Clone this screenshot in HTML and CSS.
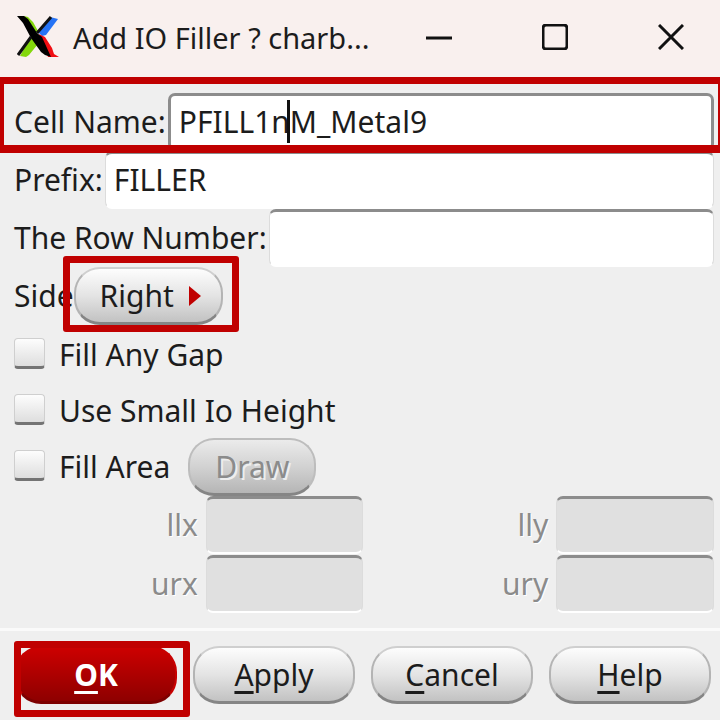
FILE: index.html
```
<!DOCTYPE html>
<html lang="en">
<head>
  <meta charset="utf-8">
  <title>Add IO Filler</title>
  <link rel="stylesheet" href="styles.css">
</head>
<body>

  <header class="titlebar">
    <svg class="logo" viewBox="0 0 42 42" aria-hidden="true">
      <path d="M7 0 L11 1 L16 6 L21 15 L17 18 Z M14 20 L21 28 L12 39 L9 41 L3 40 Z" fill="#84d80c"/>
      <path d="M33 1 L41 3 L29 19 L25 20 L21 16 Z" fill="#2673f5"/>
      <path d="M22 18 L28 21 L35 32 L37 38 L42 41 L31 41 Z" fill="#f00d12"/>
      <path d="M0 0 H7 L11 3 L20 17 L25 21 L34 41 L28 39 L24 36 L14 22 L6 7 Z" fill="#000"/>
      <path d="M34 1 L20 17 M14 21 L1 39" stroke="#111" stroke-width="3"/>
    </svg>
    <h1>Add IO Filler ? charb...</h1>
    <div class="window-buttons">
      <button type="button" aria-label="Minimize">
        <svg viewBox="0 0 26 26"><path d="M0 14 H26"/></svg>
      </button>
      <button type="button" aria-label="Maximize">
        <svg viewBox="0 0 26 26"><rect x="1" y="1" width="24" height="24" rx="3"/></svg>
      </button>
      <button type="button" aria-label="Close">
        <svg viewBox="0 0 26 26"><path d="M1 1 L25 25 M25 1 L1 25"/></svg>
      </button>
    </div>
  </header>

  <form class="form">
    <div class="row">
      <label for="cell">Cell Name:</label>
      <div class="field focused">
        <input id="cell" type="text" value="PFILL1nM_Metal9">
        <span class="caret"></span>
      </div>
      <span class="mark mark-cell"></span>
    </div>
    <div class="row">
      <label for="prefix">Prefix:</label>
      <div class="field"><input id="prefix" type="text" value="FILLER"></div>
    </div>
    <div class="row">
      <label for="rownum">The Row Number:</label>
      <div class="field"><input id="rownum" type="text"></div>
    </div>
    <div class="row">
      <span class="label">Side</span>
      <div class="marked">
        <button type="button" class="btn side">Right
          <svg class="arrow" viewBox="0 0 12 20" aria-hidden="true"><path d="M0 0 L12 10 L0 20 Z"/></svg>
        </button>
        <span class="mark mark-side"></span>
      </div>
    </div>

    <div class="checks">
      <div class="check"><input id="gap" type="checkbox"><label for="gap">Fill Any Gap</label></div>
      <div class="check"><input id="small" type="checkbox"><label for="small">Use Small Io Height</label></div>
      <div class="check">
        <input id="area" type="checkbox"><label for="area">Fill Area</label>
        <button type="button" class="btn draw" disabled>Draw</button>
      </div>
    </div>

    <div class="coords">
      <label for="llx">llx</label><input id="llx" type="text" disabled>
      <label for="lly">lly</label><input id="lly" type="text" disabled>
      <label for="urx">urx</label><input id="urx" type="text" disabled>
      <label for="ury">ury</label><input id="ury" type="text" disabled>
    </div>

    <div class="actions">
      <div class="marked">
        <button type="button" class="btn ok"><u>O</u>K</button>
        <span class="mark mark-ok"></span>
      </div>
      <button type="button" class="btn"><u>A</u>pply</button>
      <button type="button" class="btn"><u>C</u>ancel</button>
      <button type="button" class="btn"><u>H</u>elp</button>
    </div>
  </form>

</body>
</html>
```
FILE: styles.css
```
* {
  box-sizing: border-box;
}
body {
  margin: 0;
  background: #efefef;
  color: #1c1c1c;
  font-family: "Noto Sans", "Open Sans", sans-serif;
  font-size: 30px;
  line-height: 40px;
}
input, button {
  font: inherit;
  color: inherit;
}

/* title bar */
.titlebar {
  display: flex;
  align-items: center;
  height: 77px;
  padding: 0 36px 4px 17px;
  background: #f9f0ee;
}
.logo {
  width: 42px;
  height: 42px;
}
.titlebar h1 {
  flex: 1;
  margin: 2px 0 0 14px;
  font-size: 29px;
  font-weight: normal;
  white-space: nowrap;
}
.window-buttons {
  display: flex;
  gap: 90px;
}
.window-buttons button {
  width: 26px;
  height: 26px;
  padding: 0;
  border: 0;
  background: none;
}
.window-buttons svg {
  display: block;
  fill: none;
  stroke: #111;
  stroke-width: 3;
}

/* text rows */
.form {
  padding-top: 16px;
}
.row {
  position: relative;
  display: flex;
  align-items: center;
  height: 58px;
  padding: 0 6px 0 14px;
}
.row label, .label {
  white-space: nowrap;
}
.row label {
  margin-right: 2px;
}
.field {
  position: relative;
  flex: 1;
  height: 58px;
}
.field input, .coords input {
  width: 100%;
  height: 58px;
  padding: 0 8px 2px;
  border: 1px solid #dcdcdc;
  border-top: 3px solid #8c8c8c;
  border-bottom: 2px solid #fff;
  border-radius: 7px;
  background: #fff;
  outline: none;
}
.focused input {
  border-left: 3px solid #8c8c8c;
  border-right: 3px solid #8c8c8c;
}
.caret {
  position: absolute;
  left: 119px;
  top: 7px;
  width: 3px;
  height: 43px;
  background: #111;
}

/* red callout frames */
.marked {
  position: relative;
}
.mark {
  position: absolute;
  border: 7px solid #c00000;
  border-radius: 3px;
  pointer-events: none;
}
.mark-cell {
  z-index: 1;
  inset: -16px 0 -2px 0;
  border-width: 7px 2px 8px 4px;
  border-radius: 0;
}
.mark-side {
  inset: -11px -16px -7px -11px;
}
.mark-ok {
  inset: -5px -13px -13px -1px;
}

/* buttons */
.btn {
  height: 58px;
  padding: 0 24px;
  border: 2px solid #b4b4b4;
  border-top-color: #cfcfcf;
  border-bottom: 3px solid #858585;
  border-radius: 26px;
  background: linear-gradient(#fdfdfd, #e4e4e4 50%, #c2c2c2);
}
.btn u {
  text-decoration-thickness: 3px;
  text-underline-offset: 5px;
}
.side {
  display: flex;
  align-items: center;
  padding: 0 20px 0 24px;
}
.arrow {
  width: 12px;
  height: 20px;
  margin-left: 15px;
  fill: #c00000;
}
.draw {
  margin-left: 18px;
  padding: 0 25px;
  border-color: #bdbdbd;
  border-bottom-color: #858585;
  background: linear-gradient(#ebebeb, #d2d2d2 50%, #b5b5b5);
  color: #8b8b8b;
  text-shadow: 2px 2px 0 #eee;
}

/* check boxes */
.checks {
  padding: 2px 14px 0;
}
.check {
  display: flex;
  align-items: center;
  height: 56px;
}
.check input {
  appearance: none;
  width: 31px;
  height: 31px;
  margin: 0 14px 4px 0;
  border: 1px solid #cfcfcf;
  border-bottom: 3px solid #747474;
  border-radius: 4px;
  background: linear-gradient(#fdfdfd, #dedede);
}

/* coordinates */
.coords {
  display: grid;
  grid-template-columns: 11fr 9fr 11fr 9fr;
  row-gap: 1px;
  align-items: center;
  padding: 1px 6px 15px 13px;
  border-bottom: 3px solid #fafafa;
  color: #8b8b8b;
}
.coords label {
  padding-right: 8px;
  text-align: right;
  text-shadow: 1px 1px 0 #fff;
}
.coords input {
  background: #e0e0e0;
}

/* bottom buttons */
.actions {
  display: grid;
  grid-template-columns: repeat(4, 1fr);
  gap: 16px;
  padding: 15px 9px 15px 15px;
}
.ok {
  width: 100%;
  border-color: #c80000;
  border-bottom-color: #7d0000;
  background: linear-gradient(#cc0000, #8e0000);
  color: #fff;
  font-weight: bold;
}
```
